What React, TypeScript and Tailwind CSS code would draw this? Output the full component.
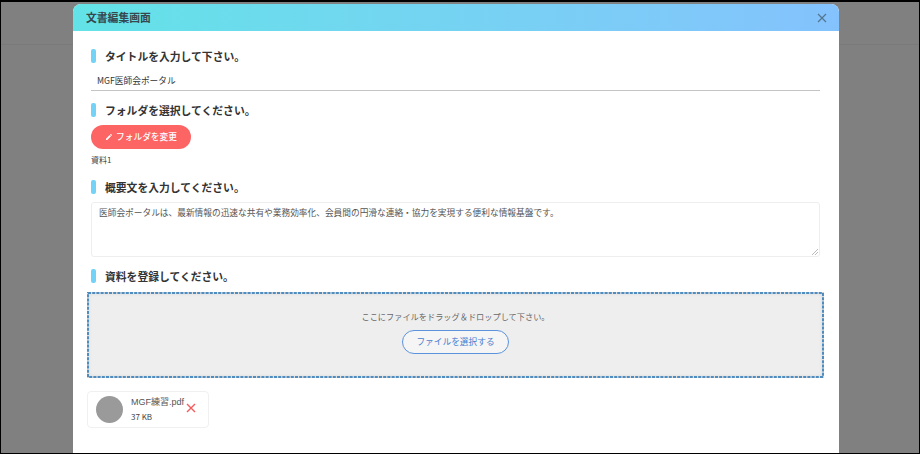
export default function App() {
  const Heading = ({ children, className }: { children: string; className: string }) => (
    <div className={`flex items-center gap-[9px] ${className}`}>
      <span className="w-[5px] h-[14px] rounded-[2px] bg-[#74d2f6]" />
      <span className="text-[10.8px] leading-[18px] font-bold text-[#333]">{children}</span>
    </div>
  );
  return (
    <div
      className="w-[920px] h-[454px] border border-black border-t-2 bg-[#808080] flex flex-col overflow-hidden relative"
      style={{ fontFamily: '"Noto Sans CJK JP", "Noto Sans", sans-serif' }}
    >
      <div className="absolute left-0 right-0 top-[42px] h-px bg-[#7a7a7a]" />
      <div className="relative w-[766px] h-[460px] ml-[72px] mt-[2px] bg-white rounded-t-[8px] flex flex-col shrink-0 overflow-hidden">
        <div className="h-[27px] shrink-0 flex items-center justify-between pl-[13px] pr-[12px] bg-gradient-to-r from-[#62e3e7] to-[#84c2fd]">
          <span className="text-[10.8px] font-bold text-[#37474f]">文書編集画面</span>
          <svg width="10" height="10" viewBox="0 0 10 10" fill="none" stroke="#53758f" strokeWidth="1.2">
            <path d="M1 1 L9 9 M9 1 L1 9" />
          </svg>
        </div>
        <div className="flex flex-col pl-[18px] pr-[19px]">
          <Heading className="mt-[16px]">タイトルを入力して下さい。</Heading>
          <div className="mt-[5px] h-[21px] pt-[2px] border-b border-[#c4c4c4] pl-[6px] flex items-center text-[8.7px] text-[#333]">
            MGF医師会ポータル
          </div>
          <Heading className="mt-[10px]">フォルダを選択してください。</Heading>
          <div className="mt-[6px] w-[100px] h-[24px] rounded-full bg-[#fd6464] flex items-center justify-center gap-[3px] text-[8.7px] font-medium text-white">
            <svg width="8" height="8" viewBox="0 0 24 24" fill="white">
              <path d="M3 17.25V21h3.75L17.81 9.94l-3.75-3.75L3 17.25zM20.71 7.04a1 1 0 0 0 0-1.41l-2.34-2.34a1 1 0 0 0-1.41 0l-1.83 1.83 3.75 3.75 1.83-1.83z" />
            </svg>
            フォルダを変更
          </div>
          <div className="mt-[5px] text-[8px] leading-[12px] text-[#444]">資料1</div>
          <Heading className="mt-[12px]">概要文を入力してください。</Heading>
          <div className="relative mt-[6px] h-[55px] border border-[#eeeeee] rounded-[3px] px-[7px] py-[3px] text-[8.7px] leading-[14px] text-[#555]">
            医師会ポータルは、最新情報の迅速な共有や業務効率化、会員間の円滑な連絡・協力を実現する便利な情報基盤です。
            <svg className="absolute right-[1px] bottom-[1px]" width="6" height="6" viewBox="0 0 6 6" stroke="#aaa" strokeWidth="0.8">
              <path d="M0 6 L6 0 M3 6 L6 3" />
            </svg>
          </div>
          <Heading className="mt-[10px]">資料を登録してください。</Heading>
          <div className="relative -ml-[4px] -mr-[4px] mt-[7px] h-[86px] bg-[#eeeeee] shadow-[inset_0_0_5px_rgba(0,0,0,0.18)] flex flex-col items-center">
            <svg className="absolute left-0 top-0" width="737" height="86" fill="none">
              <rect x="1" y="1" width="735" height="84" stroke="#4f8cbf" strokeWidth="2" strokeDasharray="3 1.2" />
            </svg>
            <div className="mt-[17px] text-[8.2px] leading-[14px] text-[#666]">ここにファイルをドラッグ＆ドロップして下さい。</div>
            <div className="mt-[7px] w-[107px] h-[24px] rounded-full border border-[#5b93dd] bg-white/40 flex items-center justify-center text-[8.7px] text-[#4a80d0]">
              ファイルを選択する
            </div>
          </div>
          <div className="-ml-[4px] mt-[13px] w-[122px] h-[37px] border border-[#f0f0f0] rounded-[4px] flex items-center pl-[8px] relative">
            <span className="w-[27px] h-[27px] rounded-full bg-[#9a9a9a] shrink-0" />
            <div className="ml-[8px] flex flex-col">
              <span className="text-[9px] leading-[13px] text-[#555]" style={{ fontFamily: '"Liberation Sans", "Noto Sans CJK JP", sans-serif' }}>MGF練習.pdf</span>
              <span className="text-[8px] leading-[12px] text-[#444] mt-[2px]">37 KB</span>
            </div>
            <svg className="absolute right-[12px] top-[11px]" width="10" height="10" viewBox="0 0 10 10" stroke="#f25c5c" strokeWidth="1.4" fill="none">
              <path d="M1 1 L9 9 M9 1 L1 9" />
            </svg>
          </div>
        </div>
      </div>
    </div>
  );
}
